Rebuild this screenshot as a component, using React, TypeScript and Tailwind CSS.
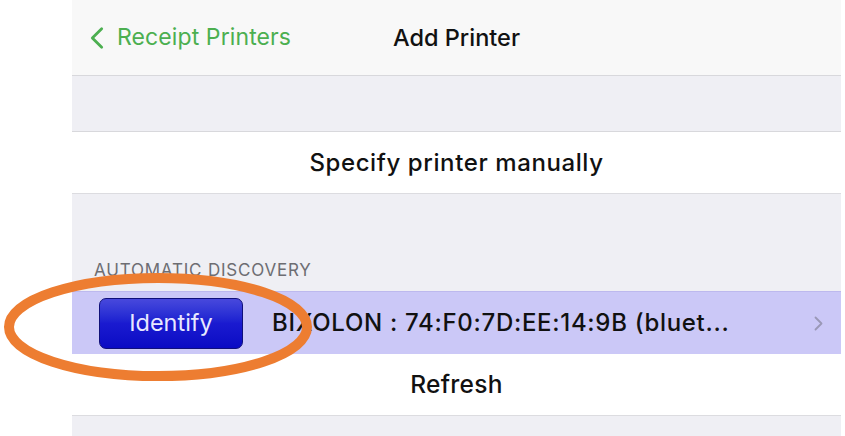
import React from 'react'

const font = { fontFamily: 'Inter, "Noto Sans", sans-serif' }

const Chevron: React.FC<{ className?: string }> = ({ className }) => (
  <svg viewBox="0 0 12 20" className={className} fill="none" stroke="currentColor" strokeWidth={2.4} strokeLinecap="round" strokeLinejoin="round">
    <path d="M10 2 L2 10 L10 18" />
  </svg>
)

const App: React.FC = () => {
  return (
    <div className="relative flex w-[845px] h-[436px] overflow-hidden bg-white" style={font}>
      <div className="w-[72px] shrink-0" />
      <div className="flex flex-col w-[769px] shrink-0 bg-[#efeff4]">
        {/* nav bar */}
        <div className="relative flex items-center h-[76px] bg-[#f8f8f8] border-b border-[#d8d8dc]">
          <div className="flex items-center gap-[13px] pl-[18px] text-[#4caf50]">
            <Chevron className="w-[14px] h-[24px]" />
            <span className="text-[23px] tracking-[0.1px]">Receipt Printers</span>
          </div>
          <span className="absolute left-0 right-0 text-center text-[23.5px] font-medium text-[#111]">Add Printer</span>
        </div>

        <div className="h-[56px] border-b border-[#d8d8dc]" />

        <div className="flex items-center justify-center h-[62px] bg-white border-b border-[#dcdce0]">
          <span className="text-[24px] font-medium text-[#111] tracking-[0.6px]">Specify printer manually</span>
        </div>

        <div className="flex items-end h-[97px] pl-[22px] pb-[8px]">
          <span className="text-[17px] text-[#6d6d72] tracking-[0.8px]">AUTOMATIC DISCOVERY</span>
        </div>

        {/* discovered printer */}
        <div className="flex items-center h-[63px] bg-[#cbc8f7] border-t border-[#bdb9ee]">
          <button className="ml-[27px] w-[144px] h-[51px] rounded-[7px] border border-[#10107a] bg-gradient-to-b from-[#4848dc] via-[#1a1ad0] to-[#0a0ac4] text-[#e8e8ff] text-[23.5px]">
            Identify
          </button>
          <span className="ml-[29px] text-[24px] font-medium text-[#111] tracking-[0.7px]">BIXOLON : 74:F0:7D:EE:14:9B (bluet...</span>
          <Chevron className="ml-auto mr-[18px] w-[9px] h-[15px] rotate-180 text-[#9a98b6]" />
        </div>

        <div className="flex items-center justify-center h-[62px] bg-white border-b border-[#dcdce0]">
          <span className="text-[24.5px] font-medium text-[#111] tracking-[0.3px]">Refresh</span>
        </div>
        <div className="flex-1" />
      </div>
      <div className="flex-1 bg-white" />

      <svg className="absolute left-0 top-0 pointer-events-none" width={845} height={436}>
        <ellipse cx={158} cy={327} rx={149} ry={49} fill="none" stroke="#ed7d31" strokeWidth={10} />
      </svg>
    </div>
  )
}

export default App
